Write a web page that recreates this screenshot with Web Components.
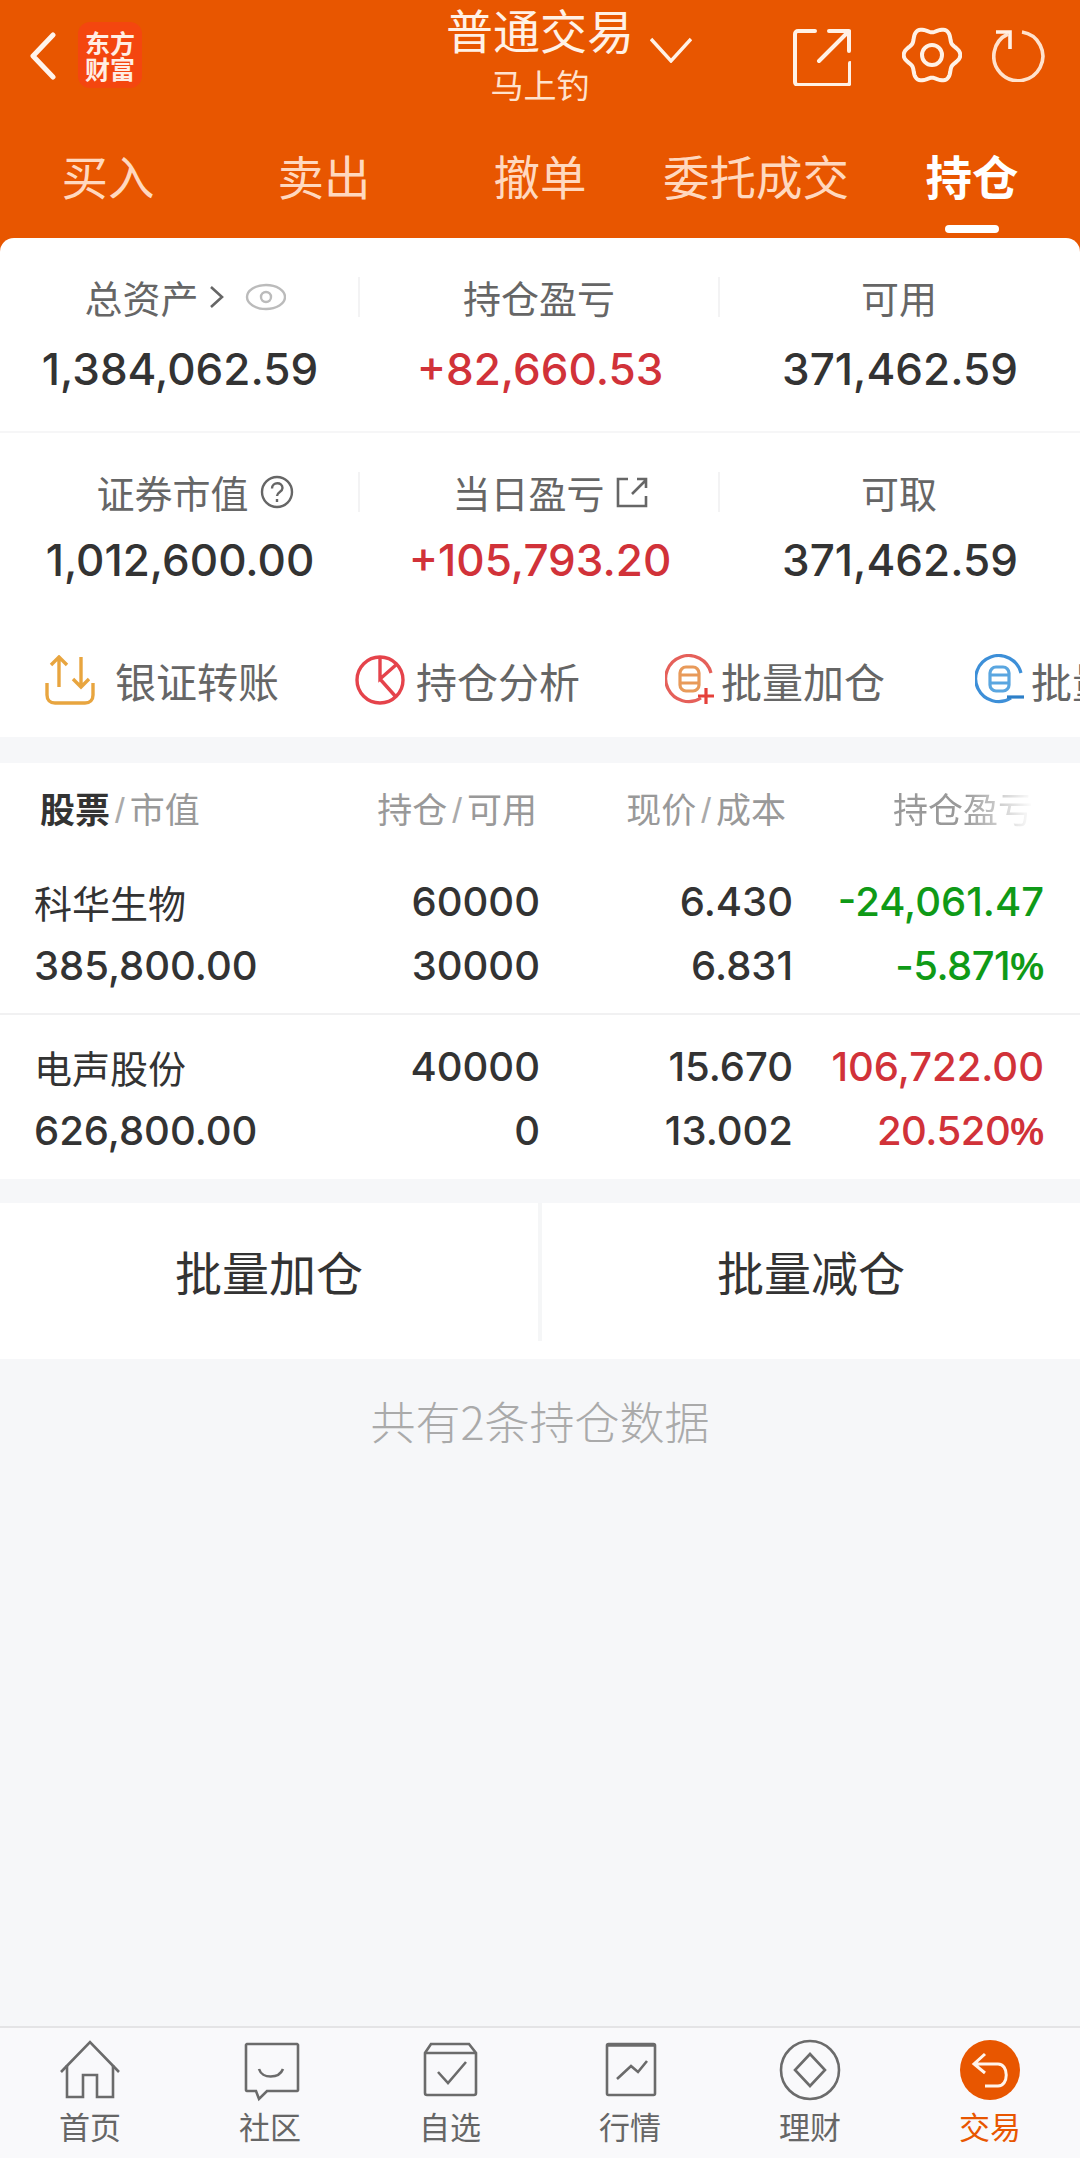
<!DOCTYPE html>
<html lang="zh">
<head>
<meta charset="utf-8">
<title>持仓</title>
<style>
html,body{margin:0;padding:0;background:#f6f7f9;}
body{font-family:"Noto Sans CJK SC","Noto Sans",sans-serif;color:#333;}
</style>
</head>
<body>
<app-shell>
  <top-header slot="header"></top-header>
  <asset-card>
    <stat-row style="--top:39px;--gap:22px;--h:193px">
      <stat-cell label="总资产" value="1,384,062.59" divider shift="6">
        <svg width="76" height="32" viewBox="0 0 76 32" fill="none" stroke="#666" stroke-width="2.6"><path d="M1 6l11 10L1 26"/><g stroke="#bbb" stroke-width="2.4"><ellipse cx="56" cy="16" rx="19" ry="12"/><circle cx="56" cy="16" r="5"/></g></svg>
      </stat-cell>
      <stat-cell label="持仓盈亏" value="+82,660.53" tone="up" divider></stat-cell>
      <stat-cell label="可用" value="371,462.59"></stat-cell>
    </stat-row>
    <stat-row style="--top:39px;--gap:18px;--h:194px;border-top:2px solid #f6f6f7">
      <stat-cell label="证券市值" value="1,012,600.00" divider shift="16">
        <svg width="34" height="34" viewBox="0 0 34 34" fill="none" stroke="#666" stroke-width="2.4"><circle cx="17" cy="17" r="15"/><path d="M12 13.5c0-7 10.500-7 10.500-.5 0 4-5.500 4-5.500 8"/><path d="M17 24v3"/></svg>
      </stat-cell>
      <stat-cell label="当日盈亏" value="+105,793.20" tone="up" divider shift="11">
        <svg width="32" height="32" viewBox="0 0 32 32" fill="none" stroke="#666" stroke-width="2.6"><path d="M12 3H2v27h28V20"/><path d="M16 18L30 4M21 3h9v9"/></svg>
      </stat-cell>
      <stat-cell label="可取" value="371,462.59"></stat-cell>
    </stat-row>
    <shortcut-bar>
      <shortcut-item text="银证转账" space="20">
        <svg width="50" height="50" viewBox="0 0 50 50" fill="none" stroke="#e8a53f" stroke-width="3.400"><path d="M14 32V2M6 10l8-8 8 8M36 2v30M28 24l8 8 8-8"/><path d="M2 28v12c0 5 3 8 8 8h30c5 0 8-3 8-8V28"/></svg>
      </shortcut-item>
      <shortcut-item text="持仓分析" space="11">
        <svg width="50" height="50" viewBox="0 0 50 50" fill="none" stroke="#e5434b" stroke-width="3.400"><circle cx="25" cy="25" r="23"/><path d="M25 2v22l17-15M25 24l16 18"/></svg>
      </shortcut-item>
      <shortcut-item text="批量加仓" space="6">
        <svg width="50" height="52" viewBox="0 0 50 52" fill="none" stroke="#e5605a" stroke-width="3.200"><path d="M36 44a23 23 0 1 1 10-25"/><rect x="15" y="13" width="19" height="24" rx="6" stroke="#e89a5a"/><path d="M15 21h19M15 29h19" stroke="#e89a5a"/><path d="M41 34v16M33 42h16" stroke="#e5403a"/></svg>
      </shortcut-item>
      <shortcut-item text="批量减仓" space="6">
        <svg width="50" height="52" viewBox="0 0 50 52" fill="none" stroke="#3d8fd8" stroke-width="3.200"><path d="M36 44a23 23 0 1 1 10-25"/><rect x="15" y="13" width="19" height="24" rx="6" stroke="#5aa6e0"/><path d="M15 21h19M15 29h19" stroke="#5aa6e0"/><path d="M32 43h17" stroke="#2d7fc8"/></svg>
      </shortcut-item>
    </shortcut-bar>
  </asset-card>
  <position-table>
    <position-row name="科华生物" value="385,800.00" hold="60000" free="30000" price="6.430" cost="6.831" pl="-24,061.47" pct="-5.871" tone="down"></position-row>
    <position-row name="电声股份" value="626,800.00" hold="40000" free="0" price="15.670" cost="13.002" pl="106,722.00" pct="20.520" tone="up" divider></position-row>
  </position-table>
  <batch-actions></batch-actions>
  <p-note>共有2条持仓数据</p-note>
  <bottom-nav slot="footer">
    <nav-item text="首页">
      <svg width="64" height="64" viewBox="0 0 64 64" fill="none" stroke="#6b6b6b" stroke-width="2.600"><path d="M3 33L32 3l29 30"/><path d="M9 26v32h16V36h14v22h16V26"/></svg>
    </nav-item>
    <nav-item text="社区">
      <svg width="64" height="64" viewBox="0 0 64 64" fill="none" stroke="#6b6b6b" stroke-width="2.600"><path d="M9 5h50a1.500 1.500 0 0 1 1 1v45a1.500 1.500 0 0 1-1 1H29l-8 8-3-8H9a1.500 1.500 0 0 1-1-1V6a1.500 1.500 0 0 1 1-1z"/><path d="M21 30c3 10 20 10 24 0"/></svg>
    </nav-item>
    <nav-item text="自选">
      <svg width="64" height="64" viewBox="0 0 64 64" fill="none" stroke="#6b6b6b" stroke-width="2.600"><path d="M13 5h38l7 9v40a2 2 0 0 1-2 2H9a2 2 0 0 1-2-2V14z"/><path d="M7 14h51"/><path d="M20 33l10 11 18-21"/></svg>
    </nav-item>
    <nav-item text="行情">
      <svg width="64" height="64" viewBox="0 0 64 64" fill="none" stroke="#6b6b6b" stroke-width="2.600"><rect x="9" y="5" width="48" height="51" rx="1.500"/><path d="M9 6h48" stroke-width="3.400"/><path d="M19 40l14-13 7 6 9-11"/></svg>
    </nav-item>
    <nav-item text="理财">
      <svg width="64" height="64" viewBox="0 0 64 64" fill="none" stroke="#6b6b6b" stroke-width="2.600"><circle cx="32" cy="31" r="29"/><path d="M32 15l15 16-15 16-15-16z"/></svg>
    </nav-item>
    <nav-item text="交易" active>
      <svg width="64" height="64" viewBox="0 0 64 64" fill="none"><circle cx="32" cy="31" r="30" fill="#e85600"/><path d="M27 15l-11 10 11 9M16 25h24c11 0 11 22 0 22H27" stroke="#fff4ec" stroke-width="3"/></svg>
    </nav-item>
  </bottom-nav>
</app-shell>

<script>
const cjk = `"Noto Sans CJK SC","Noto Sans",sans-serif`;
const nums = `Inter,"Liberation Sans",sans-serif`;
const red = "#d13239";

// rounded six lobe cog for the settings icon
let gear = "";
for (let i = 0; i < 120; i++) {
  const a = i / 120 * Math.PI * 2;
  const r = 25.5 + 2.8 * Math.cos(6 * a);
  gear += (i ? "L" : "M") + (30 + r * Math.cos(a)).toFixed(2) + " " + (30 + r * Math.sin(a)).toFixed(2);
}
gear += "Z";

class AppShell extends HTMLElement {
  constructor() {
    super();
    this.attachShadow({ mode: "open" });
    this.shadowRoot.innerHTML = `
    <style>
      :host{display:flex;flex-direction:column;width:1080px;height:2158px;overflow:hidden;background:#f6f7f9;}
      main{flex:1;display:flex;flex-direction:column;min-height:0;}
    </style>
    <slot name="header"></slot>
    <main><slot></slot></main>
    <slot name="footer"></slot>`;
  }
}

class TopHeader extends HTMLElement {
  constructor() {
    super();
    this.attachShadow({ mode: "open" });
    this.shadowRoot.innerHTML = `
    <style>
      :host{display:block;height:252px;background:#e85600;color:#fff;font-family:${cjk};}
      .bar{display:grid;grid-template-columns:1fr auto 1fr;height:113px;}
      .left{display:flex;align-items:flex-start;padding:22px 0 0 30px;gap:22px;}
      .back{margin-top:10px;}
      .logo{width:64px;height:66px;border-radius:12px;background:#f4460f;color:#ffeee4;font-size:25px;font-weight:700;line-height:26px;text-align:center;padding-top:7px;box-sizing:border-box;white-space:nowrap;}
      .center{text-align:center;padding-top:3px;}
      .title{font-size:47px;line-height:52px;color:#fff1e6;}
      .sub{font-size:33px;line-height:58px;color:#ffe2cd;}
      .right{display:flex;align-items:flex-start;padding-right:34px;}
      .chev{margin:37px 0 0 16px;}
      .share{margin:28px 0 0 auto;}
      .cog{margin:25px 0 0 51px;}
      .reload{margin:28px 0 0 30px;}
      nav{display:grid;grid-template-columns:repeat(5,216px);height:125px;}
      nav div{position:relative;text-align:center;font-size:46.5px;line-height:123px;color:#ffd8bf;white-space:nowrap;}
      nav .on{color:#fff;font-weight:700;}
      nav .on::after{content:"";position:absolute;left:50%;margin-left:-27px;bottom:5px;width:54px;height:8px;border-radius:4px;background:#fff;}
    </style>
    <div class="bar">
      <div class="left">
        <svg class="back" width="26" height="48" viewBox="0 0 26 48" fill="none" stroke="#fff4ec" stroke-width="5" stroke-linecap="round" stroke-linejoin="round"><path d="M23 3L3 24l20 21"/></svg>
        <div class="logo">东方<br>财富</div>
      </div>
      <div class="center">
        <div class="title">普通交易</div>
        <div class="sub">马上钓</div>
      </div>
      <div class="right">
        <svg class="chev" width="42" height="26" viewBox="0 0 42 26" fill="none" stroke="#fff1e6" stroke-width="3.400"><path d="M1 2l20 22L41 2"/></svg>
        <svg class="share" width="58" height="58" viewBox="0 0 58 58" fill="none" stroke="#fff1e6" stroke-width="4" stroke-linecap="round" stroke-linejoin="round"><path d="M22 3H5a3 3 0 0 0-3 3v48a3 3 0 0 0 3 3h49a3 3 0 0 0 3-3V35"/><path d="M26 33L56 3M36 3h20v20"/></svg>
        <svg class="cog" width="60" height="60" viewBox="0 0 60 60" fill="none" stroke="#fff1e6" stroke-width="4"><path d="${gear}"/><circle cx="30" cy="30" r="10"/></svg>
        <svg class="reload" width="54" height="54" viewBox="0 0 54 54" fill="none" stroke="#ffe2cd" stroke-width="3.600"><path d="M30 4a24.500 24.500 0 1 1-14 2"/><path d="M4 4h14v17" stroke="#fff1e6"/></svg>
      </div>
    </div>
    <nav>
      <div>买入</div><div>卖出</div><div>撤单</div><div>委托成交</div><div class="on">持仓</div>
    </nav>`;
  }
}

class AssetCard extends HTMLElement {
  constructor() {
    super();
    this.attachShadow({ mode: "open" });
    this.shadowRoot.innerHTML = `
    <style>
      :host{display:block;margin-top:-14px;background:#fff;border-radius:14px 14px 0 0;}
    </style>
    <slot></slot>`;
  }
}

class StatRow extends HTMLElement {
  constructor() {
    super();
    this.attachShadow({ mode: "open" });
    this.shadowRoot.innerHTML = `
    <style>
      :host{display:grid;grid-template-columns:repeat(3,360px);height:var(--h);box-sizing:border-box;padding-top:var(--top);}
    </style>
    <slot></slot>`;
  }
}

class StatCell extends HTMLElement {
  constructor() {
    super();
    this.attachShadow({ mode: "open" });
    const tone = this.getAttribute("tone") === "up" ? red : "#333";
    const shift = this.getAttribute("shift") || 0;
    this.shadowRoot.innerHTML = `
    <style>
      :host{display:block;text-align:center;}
      .label{height:40px;display:flex;align-items:center;justify-content:center;gap:11px;color:#666;font-family:${cjk};font-size:38px;line-height:40px;box-sizing:border-box;border-right:2px solid ${this.hasAttribute("divider") ? "#f3f3f4" : "transparent"};padding-left:${shift * 2}px;}
      .value{margin-top:var(--gap);font-family:${nums};font-weight:500;font-size:44px;line-height:60px;color:${tone};}
    </style>
    <div class="label"><span>${this.getAttribute("label")}</span><slot></slot></div>
    <div class="value">${this.getAttribute("value")}</div>`;
  }
}

class ShortcutBar extends HTMLElement {
  constructor() {
    super();
    this.attachShadow({ mode: "open" });
    this.shadowRoot.innerHTML = `
    <style>
      :host{display:grid;grid-auto-flow:column;grid-auto-columns:310px;padding:0 0 2px 45px;height:112px;align-items:center;overflow:hidden;box-sizing:border-box;}
    </style>
    <slot></slot>`;
  }
}

class ShortcutItem extends HTMLElement {
  constructor() {
    super();
    this.attachShadow({ mode: "open" });
    this.shadowRoot.innerHTML = `
    <style>
      :host{display:flex;align-items:center;gap:${this.getAttribute("space")}px;white-space:nowrap;font-family:${cjk};font-size:41px;color:#666;}
      svg,::slotted(svg){flex:none;}
    </style>
    <slot></slot><span>${this.getAttribute("text")}</span>`;
  }
}

class PositionTable extends HTMLElement {
  constructor() {
    super();
    this.attachShadow({ mode: "open" });
    this.shadowRoot.innerHTML = `
    <style>
      :host{display:block;margin-top:26px;background:#fff;font-family:${cjk};}
      .head{display:grid;grid-template-columns:1fr 182px 249px 247px;padding:0 47px 0 40px;height:88px;align-items:center;font-size:35px;color:#999;box-sizing:border-box;}
      .head div{text-align:right;white-space:nowrap;}
      .head div:first-child{text-align:left;}
      b{color:#333;font-weight:700;}
      i{font-style:normal;color:#aaa;padding:0 5px;font-family:"Liberation Sans",sans-serif;font-weight:300;}
      .fade{-webkit-mask-image:linear-gradient(90deg,#000 72%,transparent 100%);mask-image:linear-gradient(90deg,#000 72%,transparent 100%);}
    </style>
    <div class="head">
      <div><b>股票</b><i>/</i>市值</div>
      <div>持仓<i>/</i>可用</div>
      <div>现价<i>/</i>成本</div>
      <div class="fade">持仓盈亏</div>
    </div>
    <slot></slot>`;
  }
}

class PositionRow extends HTMLElement {
  constructor() {
    super();
    this.attachShadow({ mode: "open" });
    const a = n => this.getAttribute(n);
    const second = this.hasAttribute("divider");
    const color = a("tone") === "up" ? red : "#0f9a17";
    this.shadowRoot.innerHTML = `
    <style>
      :host{display:grid;grid-template-columns:1fr 190px 253px 251px;grid-auto-rows:64px;align-content:center;height:${second ? 166 : 162}px;padding:${second ? 4 : 3}px 36px 0 34px;box-sizing:border-box;font-family:${nums};font-weight:500;font-size:40px;color:#333;${second ? "border-top:2px solid #f1f1f2;" : ""}}
      div{line-height:64px;text-align:right;white-space:nowrap;}
      .l{text-align:left;}
      .n{font-family:${cjk};font-weight:400;font-size:38px;}
      .c{color:${color};}
      .t{letter-spacing:-.5px;}
      .p{font-family:"Liberation Sans",sans-serif;font-weight:700;font-size:38px;letter-spacing:0;}
    </style>
    <div class="l n">${a("name")}</div><div>${a("hold")}</div><div>${a("price")}</div><div class="c">${a("pl")}</div>
    <div class="l">${a("value")}</div><div>${a("free")}</div><div>${a("cost")}</div><div class="c t">${a("pct")}<span class="p">%</span></div>`;
  }
}

class BatchActions extends HTMLElement {
  constructor() {
    super();
    this.attachShadow({ mode: "open" });
    this.shadowRoot.innerHTML = `
    <style>
      :host{display:grid;grid-template-columns:538px 4px 1fr;margin-top:24px;height:156px;background:#fff;font-family:${cjk};font-size:47px;color:#333;text-align:center;}
      div{line-height:136px;}
      .line{background:#f5f6f7;height:138px;}
    </style>
    <div>批量加仓</div><div class="line"></div><div>批量减仓</div>`;
  }
}

class PNote extends HTMLElement {
  constructor() {
    super();
    this.attachShadow({ mode: "open" });
    this.shadowRoot.innerHTML = `
    <style>
      :host{display:block;padding-top:31px;text-align:center;font-family:${cjk};font-weight:300;font-size:45px;line-height:62px;color:#aaa;}
    </style>
    <slot></slot>`;
  }
}

class BottomNav extends HTMLElement {
  constructor() {
    super();
    this.attachShadow({ mode: "open" });
    this.shadowRoot.innerHTML = `
    <style>
      :host{display:grid;grid-template-columns:repeat(6,180px);height:132px;box-sizing:border-box;padding-top:11px;background:#f9f9fb;border-top:2px solid #e4e4e6;}
    </style>
    <slot></slot>`;
  }
}

class NavItem extends HTMLElement {
  constructor() {
    super();
    this.attachShadow({ mode: "open" });
    this.shadowRoot.innerHTML = `
    <style>
      :host{display:flex;flex-direction:column;align-items:center;font-family:${cjk};font-size:31px;line-height:40px;color:${this.hasAttribute("active") ? "#e85600" : "#666"};}
      span{margin-top:3px;}
    </style>
    <slot></slot><span>${this.getAttribute("text")}</span>`;
  }
}

customElements.define("app-shell", AppShell);
customElements.define("top-header", TopHeader);
customElements.define("asset-card", AssetCard);
customElements.define("stat-row", StatRow);
customElements.define("stat-cell", StatCell);
customElements.define("shortcut-bar", ShortcutBar);
customElements.define("shortcut-item", ShortcutItem);
customElements.define("position-table", PositionTable);
customElements.define("position-row", PositionRow);
customElements.define("batch-actions", BatchActions);
customElements.define("p-note", PNote);
customElements.define("bottom-nav", BottomNav);
customElements.define("nav-item", NavItem);
</script>
</body>
</html>
